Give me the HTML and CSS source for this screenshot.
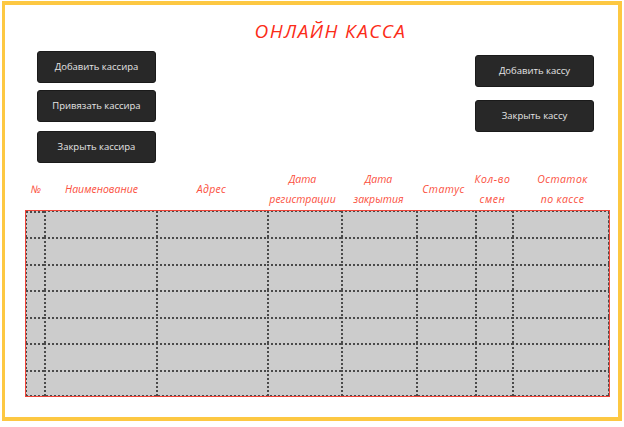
FILE: index.html
```
<!DOCTYPE html>
<html lang="ru">
<head>
<meta charset="utf-8">
<title>Онлайн касса</title>
<link rel="stylesheet" href="styles.css">
</head>
<body>
<main class="frame">
  <h1 class="title">ОНЛАЙН КАССА</h1>
  <div class="actions">
    <div class="group">
      <button>Добавить кассира</button>
      <button>Привязать кассира</button>
      <button class="last">Закрыть кассира</button>
    </div>
    <div class="group registers">
      <button>Добавить кассу</button>
      <button>Закрыть кассу</button>
    </div>
  </div>
  <div class="row head">
    <span class="num">№</span><span class="name">Наименование</span><span class="wide">Адрес</span><span class="reg">Дата<br>регистрации</span><span>Дата<br>закрытия</span><span class="status">Статус</span><span class="shifts">Кол-во<br>смен</span><span class="rest">Остаток<br>по кассе</span>
  </div>
  <div class="grid">
    <div class="row"><i></i><i></i><i></i><i></i><i></i><i></i><i></i><i></i></div>
    <div class="row"><i></i><i></i><i></i><i></i><i></i><i></i><i></i><i></i></div>
    <div class="row"><i></i><i></i><i></i><i></i><i></i><i></i><i></i><i></i></div>
    <div class="row"><i></i><i></i><i></i><i></i><i></i><i></i><i></i><i></i></div>
    <div class="row"><i></i><i></i><i></i><i></i><i></i><i></i><i></i><i></i></div>
    <div class="row"><i></i><i></i><i></i><i></i><i></i><i></i><i></i><i></i></div>
    <div class="row"><i></i><i></i><i></i><i></i><i></i><i></i><i></i><i></i></div>
  </div>
</main>
</body>
</html>
```
FILE: styles.css
```
* { box-sizing: border-box; }
body { margin: 0; background: #fff; overflow: hidden; }
.frame {
  width: 620px;
  height: 420px;
  margin: 1px 0 0 2px;
  border: 4px solid #fdc842;
  border-left-width: 3px;
}
.title {
  margin: 11px 0 1px 38px;
  height: 30px;
  font: italic 400 19px/30px "Segoe Print", "Open Sans", sans-serif;
  letter-spacing: 1.4px;
  text-align: center;
  color: #fb2c18;
}
.actions {
  display: flex;
  justify-content: space-between;
  height: 121px;
  padding: 4px 24px 0 32px;
}
.group { display: flex; flex-direction: column; gap: 7px; }
.registers { gap: 13px; padding-top: 4px; }
.last { margin-top: 2px; }
button {
  width: 119px;
  height: 32px;
  padding: 0;
  border: 1px solid #1a1a1a;
  border-radius: 3px;
  background: #282828;
  color: #e6e6e6;
  font: 9.5px/30px "Open Sans", sans-serif;
}
.row {
  display: grid;
  grid-template-columns: 18px 112px 111px 74px 75px 59px 37px 97px;
}
.head {
  width: 583px;
  margin-left: 21px;
  height: 42px;
  align-items: center;
  text-align: center;
  color: #fb5040;
  font: italic 10.5px/20px "Segoe Print", "Open Sans", sans-serif;
  white-space: nowrap;
}
.head span { justify-self: center; }
.head .num { padding-left: 2px; }
.head .name { padding-left: 3px; }
.head .wide { letter-spacing: 0.3px; }
.head .reg { padding-right: 3px; }
.head .status { padding-right: 4px; letter-spacing: 0.4px; }
.head .shifts { padding-right: 2px; letter-spacing: 0.6px; }
.head .rest { padding-left: 4px; letter-spacing: 0.4px; }
.grid {
  width: 585px;
  height: 187px;
  margin-left: 20px;
  border: 1px solid #f04438;
  display: grid;
  grid-template-rows: repeat(7, 1fr);
  background: #ccc;
}
.grid i {
  background:
    repeating-linear-gradient(90deg, #4a4a4a 0 2px, transparent 2px 4px) 0 0 / 100% 2px no-repeat,
    repeating-linear-gradient(#4a4a4a 0 2px, transparent 2px 4px) 0 0 / 2px 100% no-repeat;
}
.grid .row:first-child i {
  background-size: 100% 1px, 2px 100%;
}
.grid .row i:first-child {
  background-size: 100% 2px, 1px 100%;
}
.grid .row:last-child {
  background: repeating-linear-gradient(90deg, #4a4a4a 0 2px, transparent 2px 4px) 0 100% / 100% 1px no-repeat;
}
.grid i:last-child {
  border-right: 1px dashed #4a4a4a;
}
```
